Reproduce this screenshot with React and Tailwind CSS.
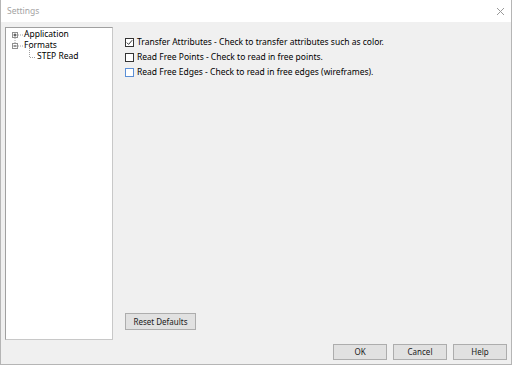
import React from "react";

const font = { fontFamily: '"Noto Sans", "Segoe UI", sans-serif' };

function Check({ checked, focus }) {
  return (
    <span
      className={`inline-flex items-center justify-center w-[9px] h-[9px] border bg-white shrink-0 ${
        focus ? "border-[#5b8fd6]" : "border-[#333333]"
      }`}
    >
      {checked && (
        <svg width="7" height="7" viewBox="0 0 7 7">
          <path d="M0.8 3.6 L2.6 5.4 L6.2 1.2" fill="none" stroke="#333" strokeWidth="1" />
        </svg>
      )}
    </span>
  );
}

function Btn({ children, className = "" }) {
  return (
    <div
      className={`flex items-center justify-center bg-[#e1e1e1] border border-[#adadad] text-[8px] text-[#1a1a1a] ${className}`}
    >
      {children}
    </div>
  );
}

export default function App() {
  return (
    <div className="w-[512px] h-[366px] bg-white" style={font}>
      <div className="w-[512px] h-[365px] flex flex-col border-x border-b border-[#b5b5b5]">
        <div className="h-[22px] flex items-center justify-between pl-[6px] pr-[6px] bg-white">
          <span className="text-[8.5px] text-[#a3a3a3]">Settings</span>
          <svg width="9" height="9" viewBox="0 0 9 9">
            <path d="M1 1 L8 8 M8 1 L1 8" stroke="#9a9a9a" strokeWidth="1" />
          </svg>
        </div>
        <div className="flex-1 flex flex-col bg-[#f0f0f0] pl-[4px] pr-[4px] pt-[5px] pb-[4px]">
          <div className="flex flex-1">
            <div className="w-[108px] h-[313px] bg-white border border-[#a0a0a0] border-b-[#c8c8c8] border-r-[#c8c8c8] pt-[1px] text-[8.5px] text-black">
              <div className="flex items-center h-[11px]">
                <svg width="18" height="11" viewBox="0 0 18 11" className="shrink-0 overflow-visible">
                  <rect x="6.5" y="3.5" width="5" height="5" fill="white" stroke="#919191" />
                  <path d="M7.5 6 H10.5 M9 4.5 V7.5" stroke="#333" />
                  <path d="M12 6 H17" stroke="#a0a0a0" strokeDasharray="1 1" />
                  <path d="M9 9 V11" stroke="#a0a0a0" strokeDasharray="1 1" />
                </svg>
                <span className="leading-none">Application</span>
              </div>
              <div className="flex items-center h-[11px]">
                <svg width="18" height="11" viewBox="0 0 18 11" className="shrink-0 overflow-visible">
                  <path d="M9 0 V3" stroke="#a0a0a0" strokeDasharray="1 1" />
                  <rect x="6.5" y="3.5" width="5" height="5" fill="white" stroke="#919191" />
                  <path d="M7.5 6 H10.5" stroke="#333" />
                  <path d="M12 6 H17" stroke="#a0a0a0" strokeDasharray="1 1" />
                </svg>
                <span className="leading-none">Formats</span>
              </div>
              <div className="flex items-center h-[11px]">
                <svg width="31" height="11" viewBox="0 0 31 11" className="shrink-0 overflow-visible">
                  <path d="M23.5 -3 V6" stroke="#a0a0a0" strokeDasharray="1 1" />
                  <path d="M24 6.5 H30" stroke="#a0a0a0" strokeDasharray="1 1" />
                </svg>
                <span className="leading-none">STEP Read</span>
              </div>
            </div>
            <div className="flex-1 flex flex-col justify-between pl-[12px] pt-[8px] pb-[10px] text-[8.5px] text-black">
              <div className="flex flex-col">
                <div className="flex items-center gap-[3px] h-[15px]">
                  <Check checked />
                  <span>Transfer Attributes - Check to transfer attributes such as color.</span>
                </div>
                <div className="flex items-center gap-[3px] h-[15px]">
                  <Check />
                  <span>Read Free Points - Check to read in free points.</span>
                </div>
                <div className="flex items-center gap-[3px] h-[15px]">
                  <Check focus />
                  <span>Read Free Edges - Check to read in free edges (wireframes).</span>
                </div>
              </div>
              <Btn className="w-[71px] h-[17px]">Reset Defaults</Btn>
            </div>
          </div>
          <div className="flex justify-end gap-[6px] pt-[4px]">
            <Btn className="w-[54px] h-[16px]">OK</Btn>
            <Btn className="w-[54px] h-[16px]">Cancel</Btn>
            <Btn className="w-[54px] h-[16px]">Help</Btn>
          </div>
        </div>
      </div>
    </div>
  );
}
